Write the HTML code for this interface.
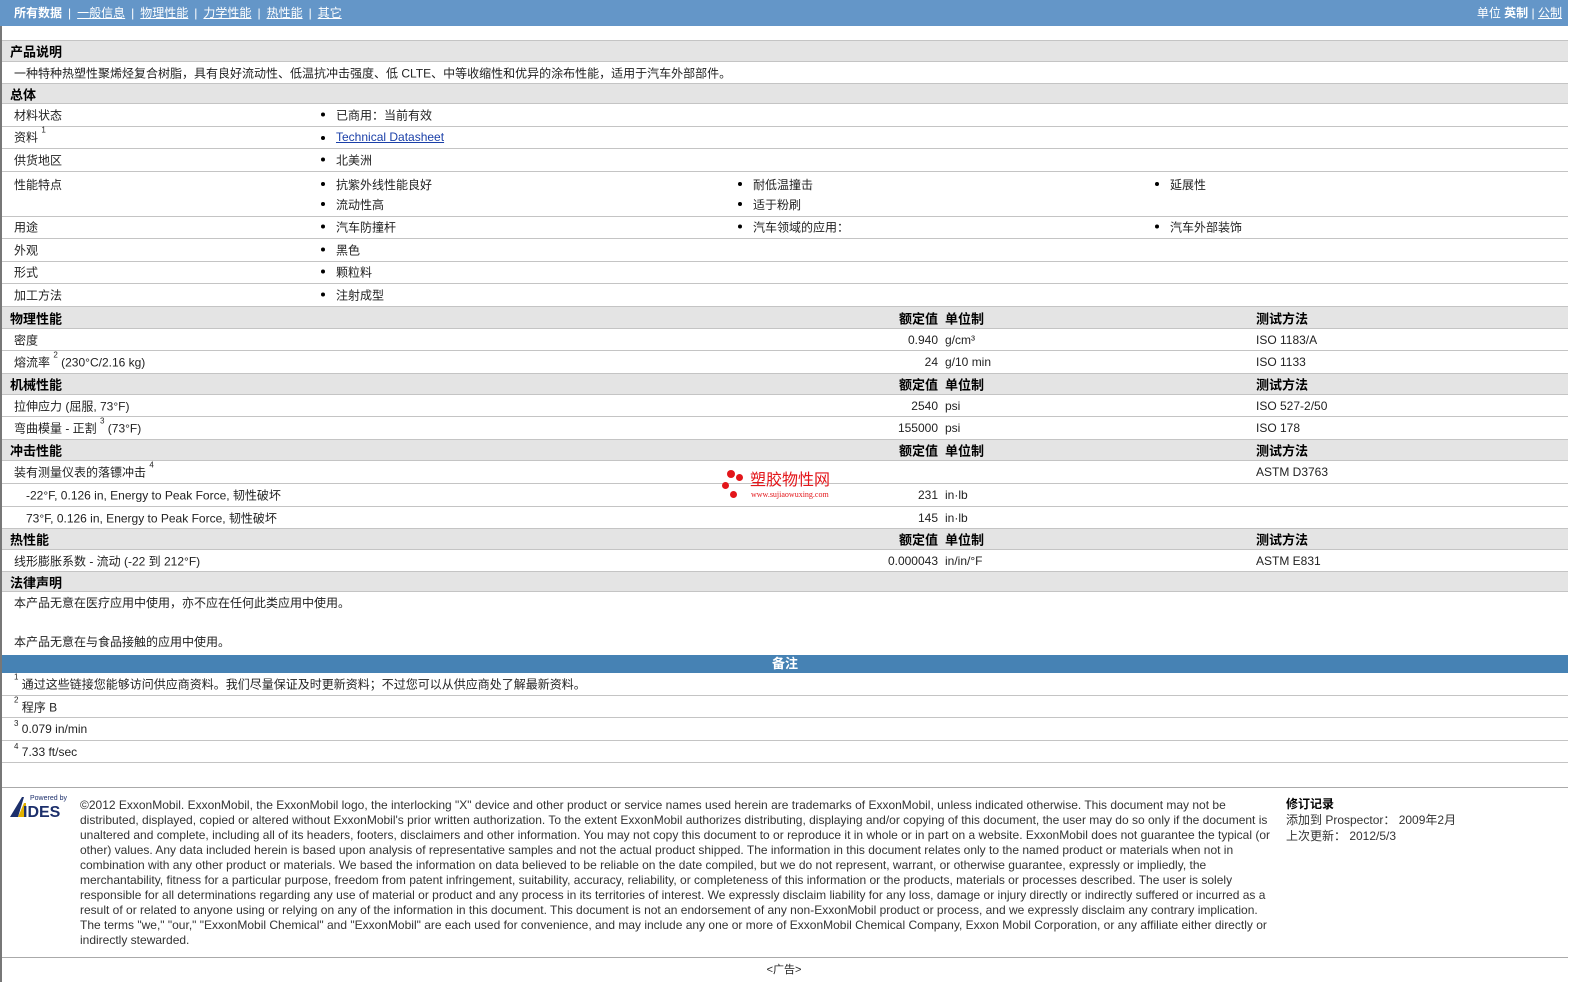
<!DOCTYPE html>
<html><head><meta charset="utf-8">
<style>
*{margin:0;padding:0;box-sizing:border-box}
body{width:1582px;height:982px;background:#fff;font-family:"Liberation Sans","Noto Sans CJK SC",sans-serif;font-size:12px;color:#222;position:relative;overflow:hidden}
.lb{position:absolute;left:0;top:26px;width:2px;height:956px;background:#777}
.nav{position:absolute;left:0;top:0;width:1568px;height:26px;background:#6496c8;color:#fff;font-size:12px;line-height:26px;padding-left:14px}
.nav a{color:#fff;text-decoration:underline}
.nav .sep{margin:0 6px}
.nav .r{position:absolute;right:6px;top:0}
.row{position:absolute;left:2px;width:1566px;border-bottom:1px solid #c4c4c4}
.h{background:#e4e4e4;font-weight:bold;font-size:13px;color:#000}
.t{position:absolute;white-space:nowrap}
.c{top:50%;transform:translateY(-50%)}
.b::before{content:"";position:absolute;left:-15px;top:6px;width:4px;height:4px;border-radius:50%;background:#000}
.v{position:absolute;right:630px;white-space:nowrap;text-align:right}
sup{font-size:8px;vertical-align:top;position:relative;top:-3px}
.foot{position:absolute;left:80px;top:798px;width:1200px;font-size:12px;line-height:15px;color:#333}
</style></head><body>
<div class="lb"></div>
<div class="nav"><b>所有数据</b><span class="sep">|</span><a>一般信息</a><span class="sep">|</span><a>物理性能</a><span class="sep">|</span><a>力学性能</a><span class="sep">|</span><a>热性能</a><span class="sep">|</span><a>其它</a>
<span class="r">单位 <b>英制</b> | <a>公制</a></span></div>

<div class="row h" style="top:40px;height:22px;border-top:1px solid #c4c4c4"><span class="t c" style="left:8px">产品说明</span></div>
<div class="row" style="top:62px;height:22px"><span class="t c" style="left:12px">一种特种热塑性聚烯烃复合树脂，具有良好流动性、低温抗冲击强度、低 CLTE、中等收缩性和优异的涂布性能，适用于汽车外部部件。</span></div>
<div class="row h" style="top:84px;height:20px"><span class="t c" style="left:8px">总体</span></div>

<div class="row" style="top:104px;height:22.5px"><span class="t c" style="left:12px">材料状态</span><span class="t c b" style="left:334px">已商用：当前有效</span></div>
<div class="row" style="top:126.5px;height:22.5px"><span class="t c" style="left:12px">资料 <sup>1</sup></span><span class="t c b" style="left:334px;color:#1a3fa8;text-decoration:underline">Technical Datasheet</span></div>
<div class="row" style="top:149px;height:22.5px"><span class="t c" style="left:12px">供货地区</span><span class="t c b" style="left:334px">北美洲</span></div>
<div class="row" style="top:171.5px;height:45px">
<span class="t" style="left:12px;top:4px">性能特点</span>
<span class="t b" style="left:334px;top:4px">抗紫外线性能良好</span>
<span class="t b" style="left:751px;top:4px">耐低温撞击</span>
<span class="t b" style="left:1168px;top:4px">延展性</span>
<span class="t b" style="left:334px;top:24px">流动性高</span>
<span class="t b" style="left:751px;top:24px">适于粉刷</span></div>
<div class="row" style="top:216.5px;height:22.5px"><span class="t c" style="left:12px">用途</span><span class="t c b" style="left:334px">汽车防撞杆</span><span class="t c b" style="left:751px">汽车领域的应用：</span><span class="t c b" style="left:1168px">汽车外部装饰</span></div>
<div class="row" style="top:239px;height:22.5px"><span class="t c" style="left:12px">外观</span><span class="t c b" style="left:334px">黑色</span></div>
<div class="row" style="top:261.5px;height:22.5px"><span class="t c" style="left:12px">形式</span><span class="t c b" style="left:334px">颗粒料</span></div>
<div class="row" style="top:284px;height:23px"><span class="t c" style="left:12px">加工方法</span><span class="t c b" style="left:334px">注射成型</span></div>

<div class="row h" style="top:307px;height:22px"><span class="t c" style="left:8px">物理性能</span><span class="v c">额定值</span><span class="t c" style="left:943px">单位制</span><span class="t c" style="left:1254px">测试方法</span></div>
<div class="row" style="top:329px;height:22px"><span class="t c" style="left:12px">密度</span><span class="v c">0.940</span><span class="t c" style="left:943px">g/cm³</span><span class="t c" style="left:1254px">ISO 1183/A</span></div>
<div class="row" style="top:351px;height:23px"><span class="t c" style="left:12px">熔流率 <sup>2</sup> (230°C/2.16 kg)</span><span class="v c">24</span><span class="t c" style="left:943px">g/10 min</span><span class="t c" style="left:1254px">ISO 1133</span></div>
<div class="row h" style="top:374px;height:21px"><span class="t c" style="left:8px">机械性能</span><span class="v c">额定值</span><span class="t c" style="left:943px">单位制</span><span class="t c" style="left:1254px">测试方法</span></div>
<div class="row" style="top:395px;height:22px"><span class="t c" style="left:12px">拉伸应力 (屈服, 73°F)</span><span class="v c">2540</span><span class="t c" style="left:943px">psi</span><span class="t c" style="left:1254px">ISO 527-2/50</span></div>
<div class="row" style="top:417px;height:23px"><span class="t c" style="left:12px">弯曲模量 - 正割 <sup>3</sup> (73°F)</span><span class="v c">155000</span><span class="t c" style="left:943px">psi</span><span class="t c" style="left:1254px">ISO 178</span></div>
<div class="row h" style="top:440px;height:21px"><span class="t c" style="left:8px">冲击性能</span><span class="v c">额定值</span><span class="t c" style="left:943px">单位制</span><span class="t c" style="left:1254px">测试方法</span></div>
<div class="row" style="top:461px;height:23px"><span class="t c" style="left:12px">装有测量仪表的落镖冲击 <sup>4</sup></span><span class="t c" style="left:1254px">ASTM D3763</span></div>
<div class="row" style="top:484px;height:23px"><span class="t c" style="left:24px">-22°F, 0.126 in, Energy to Peak Force, 韧性破坏</span><span class="v c">231</span><span class="t c" style="left:943px">in·lb</span></div>
<div class="row" style="top:507px;height:22px"><span class="t c" style="left:24px">73°F, 0.126 in, Energy to Peak Force, 韧性破坏</span><span class="v c">145</span><span class="t c" style="left:943px">in·lb</span></div>
<div class="row h" style="top:529px;height:21px"><span class="t c" style="left:8px">热性能</span><span class="v c">额定值</span><span class="t c" style="left:943px">单位制</span><span class="t c" style="left:1254px">测试方法</span></div>
<div class="row" style="top:550px;height:22px"><span class="t c" style="left:12px">线形膨胀系数 - 流动 (-22 到 212°F)</span><span class="v c">0.000043</span><span class="t c" style="left:943px">in/in/°F</span><span class="t c" style="left:1254px">ASTM E831</span></div>
<div class="row h" style="top:572px;height:20px"><span class="t c" style="left:8px">法律声明</span></div>
<div class="row" style="top:592px;height:63px;border:none"><span class="t" style="left:12px;top:2px">本产品无意在医疗应用中使用，亦不应在任何此类应用中使用。</span><span class="t" style="left:12px;top:41px">本产品无意在与食品接触的应用中使用。</span></div>
<div class="row" style="top:655px;height:18px;background:#4682b4;border:none;color:#fff;font-weight:bold;font-size:13px;text-align:center;line-height:18px">备注</div>
<div class="row" style="top:673px;height:23px"><span class="t c" style="left:12px"><sup>1</sup> 通过这些链接您能够访问供应商资料。我们尽量保证及时更新资料；不过您可以从供应商处了解最新资料。</span></div>
<div class="row" style="top:696px;height:22px"><span class="t c" style="left:12px"><sup>2</sup> 程序 B</span></div>
<div class="row" style="top:718px;height:23px"><span class="t c" style="left:12px"><sup>3</sup> 0.079 in/min</span></div>
<div class="row" style="top:741px;height:22px"><span class="t c" style="left:12px"><sup>4</sup> 7.33 ft/sec</span></div>
<div class="row" style="top:787px;height:1px;background:#aaa;border:none"></div>

<div style="position:absolute;left:722px;top:470px;width:130px;height:34px">
<span style="position:absolute;left:5px;top:0;width:8px;height:8px;border-radius:50%;background:#e3161a"></span>
<span style="position:absolute;left:14px;top:4px;width:7px;height:7px;border-radius:50%;background:#e3161a"></span>
<span style="position:absolute;left:0;top:12px;width:7px;height:7px;border-radius:50%;background:#e3161a"></span>
<span style="position:absolute;left:8px;top:21px;width:7px;height:7px;border-radius:50%;background:#e3161a"></span>
<span style="position:absolute;left:28px;top:2px;color:#e3161a;font-size:16px;line-height:18px;white-space:nowrap">塑胶物性网</span>
<span style="position:absolute;left:29px;top:20px;color:#e3161a;font-size:8px;font-family:'Liberation Serif',serif;white-space:nowrap">www.sujiaowuxing.com</span>
</div>

<div style="position:absolute;left:8px;top:793px;width:64px;height:26px">
<svg width="64" height="26" viewBox="0 0 64 26"><polygon points="2,24 14,4 16,4 10,24" fill="#1c2f6b"/><polygon points="10,24 16,10 18,10 18,24" fill="#e2b100"/><text x="22" y="7" font-size="7" fill="#1c2f6b" font-family="Liberation Sans">Powered by</text><text x="15" y="24" font-size="16" font-weight="bold" fill="#1c2f6b" font-family="Liberation Sans">IDES</text></svg></div>

<div class="foot">©2012 ExxonMobil. ExxonMobil, the ExxonMobil logo, the interlocking "X" device and other product or service names used herein are trademarks of ExxonMobil, unless indicated otherwise. This document may not be distributed, displayed, copied or altered without ExxonMobil's prior written authorization. To the extent ExxonMobil authorizes distributing, displaying and/or copying of this document, the user may do so only if the document is unaltered and complete, including all of its headers, footers, disclaimers and other information. You may not copy this document to or reproduce it in whole or in part on a website. ExxonMobil does not guarantee the typical (or other) values. Any data included herein is based upon analysis of representative samples and not the actual product shipped. The information in this document relates only to the named product or materials when not in combination with any other product or materials. We based the information on data believed to be reliable on the date compiled, but we do not represent, warrant, or otherwise guarantee, expressly or impliedly, the merchantability, fitness for a particular purpose, freedom from patent infringement, suitability, accuracy, reliability, or completeness of this information or the products, materials or processes described. The user is solely responsible for all determinations regarding any use of material or product and any process in its territories of interest. We expressly disclaim liability for any loss, damage or injury directly or indirectly suffered or incurred as a result of or related to anyone using or relying on any of the information in this document. This document is not an endorsement of any non-ExxonMobil product or process, and we expressly disclaim any contrary implication. The terms "we," "our," "ExxonMobil Chemical" and "ExxonMobil" are each used for convenience, and may include any one or more of ExxonMobil Chemical Company, Exxon Mobil Corporation, or any affiliate either directly or indirectly stewarded.</div>
<div style="position:absolute;left:1286px;top:796px;font-size:12px;line-height:16px;color:#333"><b style="color:#000">修订记录</b><br>添加到 Prospector： 2009年2月<br>上次更新： 2012/5/3</div>
<div class="row" style="top:957px;height:1px;background:#aaa;border:none"></div>
<div style="position:absolute;left:0;top:961px;width:1568px;text-align:center;font-size:11px">&lt;广告&gt;</div>
</body></html>
